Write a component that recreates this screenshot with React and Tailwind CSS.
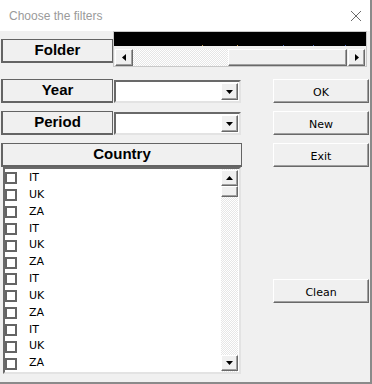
import React from 'react';

const hatch = 'bg-[repeating-conic-gradient(#e6e6e6_0_25%,#ffffff_0_50%)] bg-[length:2px_2px]';

function Label({ text, className = '' }) {
  return (
    <div
      className={`flex items-center justify-center bg-[#f0f0f0] border border-[#646464] border-l-2 border-b-2 font-bold text-[15px] text-black ${className}`}
      style={{ fontFamily: '"Liberation Sans", Arial, sans-serif' }}
    >
      {text}
    </div>
  );
}

function Arrow({ dir }) {
  const pts = {
    up: '0,4 7,4 3.5,0',
    down: '0,0 7,0 3.5,4',
    left: '4,0 4,7 0,3.5',
    right: '0,0 0,7 4,3.5',
  }[dir];
  const w = dir === 'up' || dir === 'down' ? 7 : 4;
  const h = dir === 'up' || dir === 'down' ? 4 : 7;
  return (
    <svg width={w} height={h} viewBox={`0 0 ${w} ${h}`}>
      <polygon points={pts} fill="#000" />
    </svg>
  );
}

function SmallBtn({ dir, className = '' }) {
  return (
    <div
      className={`flex items-center justify-center bg-[#f0f0f0] border border-t-white border-l-white border-r-[#696969] border-b-[#696969] shadow-[inset_-1px_-1px_0_#a0a0a0] ${className}`}
    >
      <Arrow dir={dir} />
    </div>
  );
}

function Combo() {
  return (
    <div className="flex items-center justify-end w-[127px] h-[23px] bg-white border-2 border-t-[#696969] border-l-[#696969] border-r-[#e3e3e3] border-b-[#e3e3e3] pr-[1px]">
      <SmallBtn dir="down" className="w-[17px] h-[17px]" />
    </div>
  );
}

function Button({ text, className = '' }) {
  return (
    <button
      className={`w-[96px] h-[24px] pt-[2px] bg-[#f0f0f0] border border-t-white border-l-white border-r-[#696969] border-b-[#696969] shadow-[inset_-1px_-1px_0_#a0a0a0] text-[11px] leading-none text-black ${className}`}
      style={{ fontFamily: '"DejaVu Sans", Verdana, sans-serif' }}
    >
      {text}
    </button>
  );
}

const countries = ['IT', 'UK', 'ZA', 'IT', 'UK', 'ZA', 'IT', 'UK', 'ZA', 'IT', 'UK', 'ZA'];

export default function App() {
  return (
    <div className="w-[372px] h-[384px] bg-[#f0f0f0] flex flex-col border-r-2 border-b-2 border-[#8a8a8a] overflow-hidden">
      {/* title bar */}
      <div className="h-[31px] bg-white flex items-center justify-between pl-[9px] pr-[8px] shrink-0">
        <span
          className="text-[12px] text-[#9a9a9a]"
          style={{ fontFamily: '"Liberation Sans", Arial, sans-serif' }}
        >
          Choose the filters
        </span>
        <svg width="12" height="12" viewBox="0 0 12 12">
          <path d="M1 1 L11 11 M11 1 L1 11" stroke="#6b6b6b" strokeWidth="1" />
        </svg>
      </div>

      {/* folder row */}
      <div className="flex items-start pl-[1px]">
        <Label text="Folder" className="w-[112px] h-[24px] mt-[8px]" />
        <div className="w-[254px] h-[36px] border border-[#c8c8c8] bg-[#f0f0f0] flex flex-col">
          <div className="h-[14px] bg-black flex items-end">
            <div className="ml-[88px] w-px h-px bg-[#c8a050]" />
            <div className="ml-[34px] w-px h-px bg-[#c8a050]" />
            <div className="ml-[45px] w-px h-px bg-[#5070c0]" />
            <div className="ml-[29px] w-px h-px bg-[#5070c0]" />
            <div className="ml-[31px] w-px h-px bg-[#5070c0]" />
          </div>
          <div className="flex h-[18px] mt-[3px] mx-[1px] items-stretch">
            <SmallBtn dir="left" className="w-[18px]" />
            <div className={`w-[95px] ${hatch}`} />
            <div className="flex-1 bg-[#f0f0f0] border border-t-white border-l-white border-r-[#696969] border-b-[#696969] shadow-[inset_-1px_-1px_0_#a0a0a0]" />
            <SmallBtn dir="right" className="w-[17px] ml-px" />
          </div>
        </div>
      </div>

      {/* main */}
      <div className="flex mt-[12px]">
        <div className="w-[241px] ml-[1px] flex flex-col">
          <div className="flex items-start gap-[1px]">
            <Label text="Year" className="w-[112px] h-[24px]" />
            <div className="mt-[1px]">
              <Combo />
            </div>
          </div>
          <div className="flex items-start gap-[1px] mt-[8px]">
            <Label text="Period" className="w-[112px] h-[24px]" />
            <div className="mt-[1px]">
              <Combo />
            </div>
          </div>
          <Label text="Country" className="w-[241px] h-[24px] mt-[8px]" />
          <div className="ml-[2px] w-[238px] h-[207px] bg-white border-2 border-t-[#696969] border-l-[#696969] border-r-[#e3e3e3] border-b-[#e3e3e3] flex">
            <div className="flex-1 flex flex-col pt-[1px]">
              {countries.map((c, i) => (
                <div key={i} className="h-[17px] flex items-center">
                  <div className="w-[12px] h-[12px] border-2 border-[#646464] bg-white" />
                  <span
                    className="ml-[12px] text-[11px] text-black"
                    style={{ fontFamily: '"DejaVu Sans", Verdana, sans-serif' }}
                  >
                    {c}
                  </span>
                </div>
              ))}
            </div>
            <div className={`w-[17px] mr-[1px] flex flex-col ${hatch}`}>
              <SmallBtn dir="up" className="h-[16px] mt-[1px]" />
              <div className="h-[11px] bg-[#f0f0f0] border border-t-white border-l-white border-r-[#696969] border-b-[#696969] shadow-[inset_-1px_-1px_0_#a0a0a0]" />
              <div className="flex-1" />
              <SmallBtn dir="down" className="h-[16px] mb-[1px]" />
            </div>
          </div>
        </div>

        <div className="ml-[31px] flex flex-col">
          <Button text="OK" />
          <Button text="New" className="mt-[8px]" />
          <Button text="Exit" className="mt-[8px]" />
          <Button text="Clean" className="mt-[112px]" />
        </div>
      </div>
    </div>
  );
}
